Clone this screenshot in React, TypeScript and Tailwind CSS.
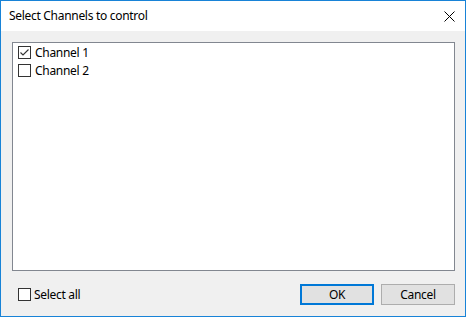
import React, { useState } from 'react';

const font = { fontFamily: '"Noto Sans", "Open Sans", sans-serif', letterSpacing: '-0.3px' };

// Classic Win10 style check box
const CheckBox: React.FC<{ checked: boolean; onToggle: () => void }> = ({ checked, onToggle }) => (
  <button
    type="button"
    onClick={onToggle}
    className="w-[13px] h-[13px] border border-[#333333] bg-white flex items-center justify-center shrink-0 p-0"
  >
    {checked && (
      <svg width="11" height="11" viewBox="0 0 11 11">
        <path d="M1.5 5.5 L4 8 L9.5 2.5" fill="none" stroke="#333333" strokeWidth="1.1" />
      </svg>
    )}
  </button>
);

export default function App() {
  const [channels, setChannels] = useState([
    { name: 'Channel 1', on: true },
    { name: 'Channel 2', on: false },
  ]);
  const allOn = channels.every(c => c.on);

  const toggle = (i: number) =>
    setChannels(prev => prev.map((c, j) => (j === i ? { ...c, on: !c.on } : c)));

  return (
    <div className="w-[466px] h-[318px] bg-white text-[12px] text-black" style={font}>
      <div className="w-[466px] h-[317px] border border-[#1883d7] flex flex-col">
        {/* title bar */}
        <div className="h-[30px] bg-white flex items-center justify-between pl-[8px] pr-[10px]">
          <span className="leading-none">Select Channels to control</span>
          <svg width="11" height="11" viewBox="0 0 11 11">
            <path d="M0.5 0.5 L10.5 10.5 M10.5 0.5 L0.5 10.5" stroke="#000" strokeWidth="1" />
          </svg>
        </div>

        {/* body */}
        <div className="flex-1 bg-[#f0f0f0] flex flex-col pt-[11px] pl-[11px]">
          <div className="w-[443px] h-[229px] border border-[#828790] bg-white flex flex-col pt-[3px] pl-[5px] gap-[5px]">
            {channels.map((c, i) => (
              <label key={c.name} className="flex items-center gap-[4px] h-[13px] leading-none">
                <CheckBox checked={c.on} onToggle={() => toggle(i)} />
                <span>{c.name}</span>
              </label>
            ))}
          </div>

          <div className="flex items-center mt-[13px] h-[21px]">
            <label className="flex items-center gap-[3px] ml-[6px] leading-none">
              <CheckBox
                checked={allOn}
                onToggle={() => setChannels(prev => prev.map(c => ({ ...c, on: !allOn })))}
              />
              <span>Select all</span>
            </label>
            <button className="ml-auto w-[74px] h-[21px] border-2 border-[#0078d7] bg-[#e1e1e1] leading-none">
              OK
            </button>
            <button className="ml-[7px] mr-[10px] w-[74px] h-[21px] border border-[#adadad] bg-[#e1e1e1] leading-none">
              Cancel
            </button>
          </div>
        </div>
      </div>
    </div>
  );
}
